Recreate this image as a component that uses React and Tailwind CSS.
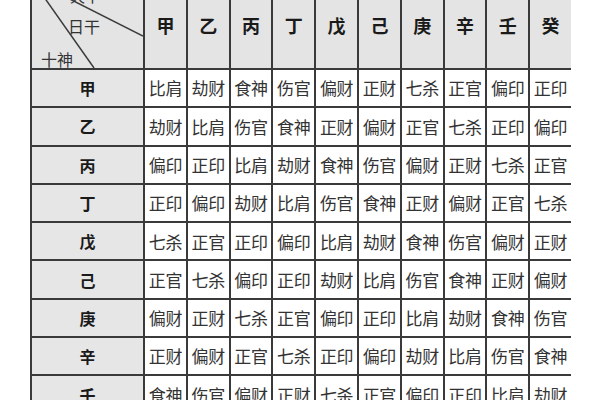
const stems = ["甲", "乙", "丙", "丁", "戊", "己", "庚", "辛", "壬", "癸"];

const rows = [
  ["甲", ["比肩", "劫财", "食神", "伤官", "偏财", "正财", "七杀", "正官", "偏印", "正印"]],
  ["乙", ["劫财", "比肩", "伤官", "食神", "正财", "偏财", "正官", "七杀", "正印", "偏印"]],
  ["丙", ["偏印", "正印", "比肩", "劫财", "食神", "伤官", "偏财", "正财", "七杀", "正官"]],
  ["丁", ["正印", "偏印", "劫财", "比肩", "伤官", "食神", "正财", "偏财", "正官", "七杀"]],
  ["戊", ["七杀", "正官", "正印", "偏印", "比肩", "劫财", "食神", "伤官", "偏财", "正财"]],
  ["己", ["正官", "七杀", "偏印", "正印", "劫财", "比肩", "伤官", "食神", "正财", "偏财"]],
  ["庚", ["偏财", "正财", "七杀", "正官", "偏印", "正印", "比肩", "劫财", "食神", "伤官"]],
  ["辛", ["正财", "偏财", "正官", "七杀", "正印", "偏印", "劫财", "比肩", "伤官", "食神"]],
  ["壬", ["食神", "伤官", "偏财", "正财", "七杀", "正官", "偏印", "正印", "比肩", "劫财"]],
];

export default function App() {
  return (
    <div className="h-[400px] w-[600px] overflow-hidden bg-white font-['Noto_Sans_CJK_SC',sans-serif] text-[#333]">
      <div className="ml-[30px] mt-[-28px] grid w-[541px] grid-cols-[111px_repeat(10,40.8px)] gap-[2px] bg-[#3a3a3a] p-[2px]">
        {/* corner cell: diagonals drawn under the labels */}
        <div className="relative flex h-[94px] flex-col items-start bg-[#e4e4e4] pt-[14px] text-[16px] leading-none">
          <svg className="absolute inset-0" width="111" height="94">
            <line x1="0" y1="6" x2="62" y2="94" stroke="#3a3a3a" strokeWidth="1.5" />
            <line x1="0" y1="6" x2="111" y2="62" stroke="#3a3a3a" strokeWidth="1.5" />
          </svg>
          <span className="relative ml-[38px] text-[15px]">天干</span>
          <span className="relative ml-[36px] mt-[15px]">日干</span>
          <span className="relative ml-[9px] mt-[17px]">十神</span>
        </div>
        {stems.map((s) => (
          <div
            key={s}
            className="flex h-[94px] items-center justify-center bg-[#e4e4e4] pt-[8px] text-[18px] font-bold text-[#1a1a1a]"
          >
            {s}
          </div>
        ))}

        {rows.map(([label, cells]) => (
          <div key={label} className="contents">
            <div className="flex h-[36.3px] items-center justify-center bg-[#e6e6e6] text-[16px] font-bold text-[#1a1a1a]">
              {label}
            </div>
            {cells.map((c, i) => (
              <div
                key={i}
                className="flex h-[36.3px] items-center justify-center whitespace-nowrap bg-white text-[17px] tracking-[-0.3px]"
              >
                {c}
              </div>
            ))}
          </div>
        ))}
      </div>
    </div>
  );
}
